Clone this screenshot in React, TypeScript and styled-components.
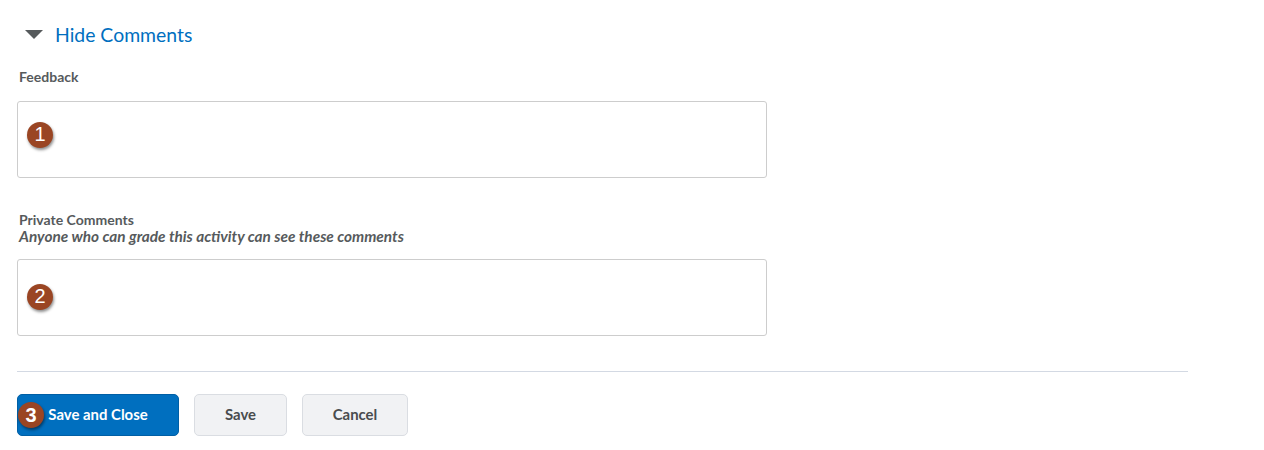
import React from 'react';
import styled, { createGlobalStyle } from 'styled-components';

const GlobalStyle = createGlobalStyle`
    body {
        margin: 0;
        background: #fff;
        font-family: Lato, "Noto Sans", sans-serif;
    }
`;

const Page = styled.div`
    width: 1264px;
    height: 450px;
    padding: 22px 0 0 17px;
    box-sizing: border-box;
`;

const Toggle = styled.div`
    display: flex;
    align-items: center;
    gap: 12px;
    padding-left: 8px;
    height: 24px;
    color: #006fbf;
    font-size: 19.4px;
    cursor: pointer;
`;

const Caret = styled.span`
    width: 0;
    height: 0;
    border-left: 9.5px solid transparent;
    border-right: 9.5px solid transparent;
    border-top: 9px solid #565a5c;
    margin-top: 1px;
`;

const Field = styled.div<{ $top: number }>`
    margin-top: ${p => p.$top}px;
    width: 1171px;
`;

const Label = styled.div`
    padding-left: 2px;
    font-size: 14px;
    font-weight: 700;
    color: #565a5c;
    line-height: 16px;
`;

const Hint = styled.div`
    padding-left: 2px;
    font-size: 15.35px;
    font-style: italic;
    font-weight: 700;
    color: #565a5c;
    line-height: 16px;
`;

const TextBox = styled.div<{ $top: number; $lift: number }>`
    margin-top: ${p => p.$top}px;
    width: 750px;
    height: 77px;
    border: 1px solid #cdcdcd;
    border-radius: 3px;
    box-sizing: border-box;
    display: flex;
    align-items: center;
    padding-left: 9px;
    padding-bottom: ${p => p.$lift}px;
`;

const Badge = styled.span`
    width: 26px;
    height: 26px;
    border-radius: 50%;
    background: #9a4523;
    color: #fff;
    font-family: "Liberation Sans", Arial, sans-serif;
    font-size: 20px;
    display: flex;
    align-items: center;
    justify-content: center;
    box-shadow: 1px 2px 3px rgba(0, 0, 0, 0.45);
    flex-shrink: 0;
`;

const Divider = styled.hr`
    margin: 35px 0 0 0;
    width: 1171px;
    border: none;
    border-top: 1px solid #d3d9e3;
`;

const ButtonRow = styled.div`
    display: flex;
    gap: 15px;
    margin-top: 22px;
`;

const Button = styled.button<{ $primary?: boolean; $width: number }>`
    position: relative;
    width: ${p => p.$width}px;
    height: 42px;
    border-radius: 5px;
    box-sizing: border-box;
    font-family: Lato, "Noto Sans", sans-serif;
    font-size: 14.9px;
    font-weight: 700;
    border: 1px solid ${p => (p.$primary ? '#005fa5' : '#dadde2')};
    background: ${p => (p.$primary ? '#006fbf' : '#f1f2f4')};
    color: ${p => (p.$primary ? '#fff' : '#494c4e')};
    display: flex;
    align-items: center;
    justify-content: center;
    padding: 0 0 2px 0;
`;

const ButtonBadge = styled.span`
    position: absolute;
    left: 0;
    top: 7px;
`;

const App: React.FC = () => {
    return (
        <Page>
            <GlobalStyle />
            <Toggle>
                <Caret />
                <span>Hide Comments</span>
            </Toggle>
            <Field $top={23}>
                <Label>Feedback</Label>
                <TextBox $top={16} $lift={10}>
                    <Badge>1</Badge>
                </TextBox>
            </Field>
            <Field $top={34}>
                <Label>Private Comments</Label>
                <Hint>Anyone who can grade this activity can see these comments</Hint>
                <TextBox $top={15} $lift={2}>
                    <Badge>2</Badge>
                </TextBox>
            </Field>
            <Divider />
            <ButtonRow>
                <Button $primary $width={162}>
                    <ButtonBadge><Badge>3</Badge></ButtonBadge>
                    Save and Close
                </Button>
                <Button $width={93}>Save</Button>
                <Button $width={106}>Cancel</Button>
            </ButtonRow>
        </Page>
    );
};

export default App;
